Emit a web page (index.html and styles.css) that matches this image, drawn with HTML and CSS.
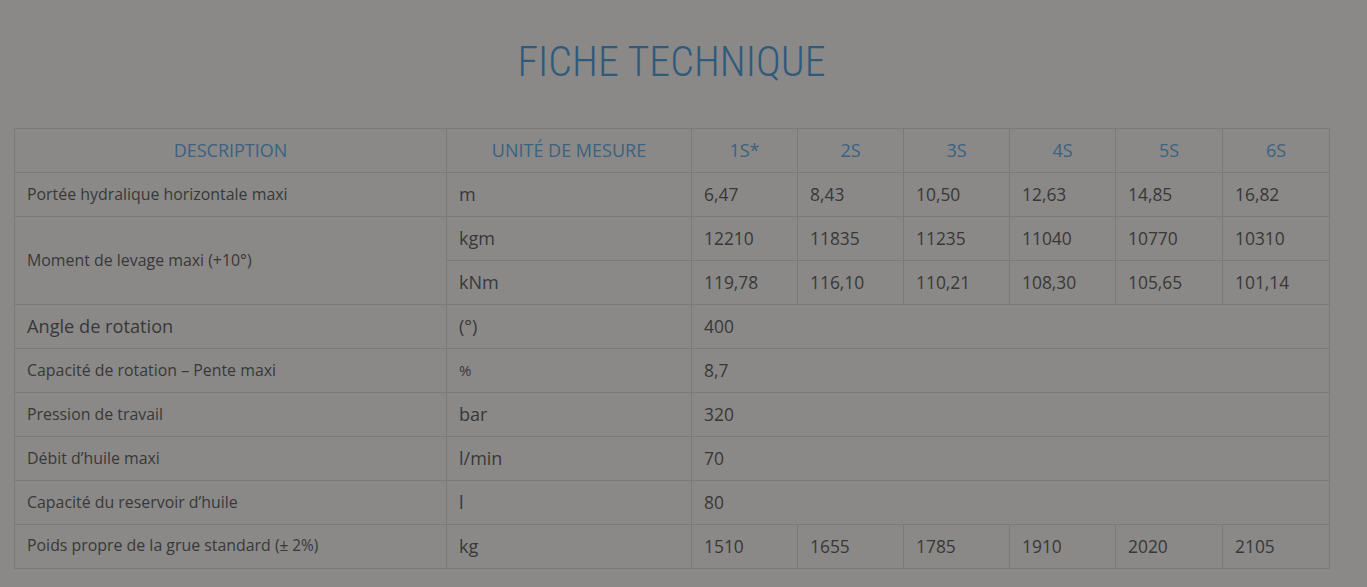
FILE: index.html
```html
<!DOCTYPE html>
<html lang="fr">
<head>
<meta charset="utf-8">
<title>Fiche technique</title>
<link rel="stylesheet" href="styles.css">
</head>
<body>
<div class="page">
  <h1 class="title">FICHE TECHNIQUE</h1>
  <table class="spec">
    <colgroup>
      <col class="c-desc"><col class="c-unit">
      <col class="c-num"><col class="c-num"><col class="c-num"><col class="c-num"><col class="c-num7"><col class="c-num7">
    </colgroup>
    <thead>
      <tr>
        <th>DESCRIPTION</th><th>UNITÉ DE MESURE</th><th>1S*</th><th>2S</th><th>3S</th><th>4S</th><th>5S</th><th>6S</th>
      </tr>
    </thead>
    <tbody>
      <tr><td class="desc">Portée hydralique horizontale maxi</td><td class="unit">m</td><td>6,47</td><td>8,43</td><td>10,50</td><td>12,63</td><td>14,85</td><td>16,82</td></tr>
      <tr><td class="desc" rowspan="2">Moment de levage maxi (+10°)</td><td class="unit">kgm</td><td>12210</td><td>11835</td><td>11235</td><td>11040</td><td>10770</td><td>10310</td></tr>
      <tr><td class="unit">kNm</td><td>119,78</td><td>116,10</td><td>110,21</td><td>108,30</td><td>105,65</td><td>101,14</td></tr>
      <tr><td class="desc big">Angle de rotation</td><td class="unit">(°)</td><td colspan="6">400</td></tr>
      <tr><td class="desc">Capacité de rotation – Pente maxi</td><td class="unit small">%</td><td colspan="6">8,7</td></tr>
      <tr><td class="desc">Pression de travail</td><td class="unit">bar</td><td colspan="6">320</td></tr>
      <tr><td class="desc">Débit d’huile maxi</td><td class="unit">l/min</td><td colspan="6">70</td></tr>
      <tr><td class="desc">Capacité du reservoir d’huile</td><td class="unit">l</td><td colspan="6">80</td></tr>
      <tr><td class="desc">Poids propre de la grue standard <span class="small">(± 2%)</span></td><td class="unit">kg</td><td>1510</td><td>1655</td><td>1785</td><td>1910</td><td>2020</td><td>2105</td></tr>
    </tbody>
  </table>
</div>
</body>
</html>
```

FILE: styles.css
```css
html, body {
  margin: 0;
  padding: 0;
  background: #8a8988;
}
body {
  font-family: "Open Sans", "Liberation Sans", sans-serif;
  color: #383838;
}
.page {
  padding: 0 38px 0 14px;
}
.title {
  margin: 0;
  padding-top: 38px;
  height: 90px;
  box-sizing: border-box;
  text-align: center;
  font-family: "Roboto Condensed", "Liberation Sans Narrow", "DejaVu Sans Condensed", "Roboto", sans-serif;
  font-stretch: condensed;
  font-weight: 300;
  font-size: 42px;
  line-height: 48px;
  color: #2f5a7c;
}
.spec {
  width: 1315px;
  border-collapse: collapse;
  table-layout: fixed;
  margin-top: 38px;
  border: 1px solid #7b7a79;
}
.c-desc { width: 432px; }
.c-unit { width: 245px; }
.c-num { width: 106px; }
.c-num7 { width: 107px; }
.spec th, .spec td {
  border: 1px solid #7b7a79;
  height: 44px;
  padding: 0 12px 2px;
  box-sizing: border-box;
  text-align: left;
  vertical-align: middle;
  font-size: 17.4px;
  font-weight: 400;
  line-height: 24px;
}
.spec th {
  text-align: center;
  color: #3a6282;
  font-size: 18px;
}
.spec td.unit {
  font-size: 18px;
}
.spec td.desc {
  font-size: 15.9px;
}
.spec td.desc.big {
  font-size: 18.2px;
}
.spec td.unit.small {
  font-size: 15px;
}
.small {
  font-size: 15.4px;
}
```
